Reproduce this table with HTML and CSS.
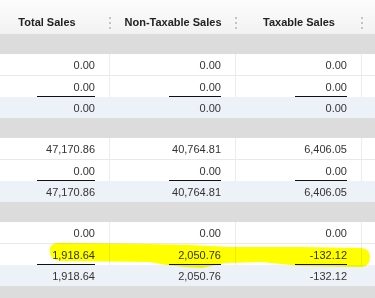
FILE: index.html
```html
<!DOCTYPE html>
<html>
<head>
<meta charset="utf-8">
<link rel="stylesheet" href="styles.css">
</head>
<body>
<div class="wrap">
  <div class="grid">
    <div class="hdr">
      <div class="hc">Total Sales<span class="grip"></span></div>
      <div class="hc">Non-Taxable Sales<span class="grip"></span></div>
      <div class="hc">Taxable Sales<span class="grip"></span></div>
      <div class="hc"></div>
    </div>

    <div class="band"></div>
    <div class="row first"><div class="c">0.00</div><div class="c">0.00</div><div class="c">0.00</div><div class="c"></div></div>
    <div class="row"><div class="c"><span class="ul w1">0.00</span></div><div class="c"><span class="ul">0.00</span></div><div class="c"><span class="ul">0.00</span></div><div class="c"></div></div>
    <div class="row total"><div class="c">0.00</div><div class="c">0.00</div><div class="c">0.00</div><div class="c"></div></div>

    <div class="band"></div>
    <div class="row first"><div class="c">47,170.86</div><div class="c">40,764.81</div><div class="c">6,406.05</div><div class="c"></div></div>
    <div class="row"><div class="c"><span class="ul w1">0.00</span></div><div class="c"><span class="ul">0.00</span></div><div class="c"><span class="ul">0.00</span></div><div class="c"></div></div>
    <div class="row total"><div class="c">47,170.86</div><div class="c">40,764.81</div><div class="c">6,406.05</div><div class="c"></div></div>

    <div class="band"></div>
    <div class="row first"><div class="c">0.00</div><div class="c">0.00</div><div class="c">0.00</div><div class="c"></div></div>
    <div class="row"><div class="c"><span class="ul w1">1,918.64</span></div><div class="c"><span class="ul">2,050.76</span></div><div class="c"><span class="ul">-132.12</span></div><div class="c"></div></div>
    <div class="row total"><div class="c">1,918.64</div><div class="c">2,050.76</div><div class="c">-132.12</div><div class="c"></div></div>

    <div class="band"></div>
  </div>
  <svg class="marker" width="375" height="298" viewBox="0 0 375 298">
    <path d="M50,248 Q51,243 60,243 L150,244 L190,245 L230,247 L300,247 L362,248 Q370,249 370,257 Q370,266 362,267 L300,266 L262,262 L226,263 L202,268 L185,267 L166,265 L150,262 L60,261 Q50,260 50,252 Z" fill="#ffff00"/>
  </svg>
</div>
</body>
</html>
```
FILE: styles.css
```css
html, body {
  margin: 0;
  padding: 0;
  background: #ffffff;
}
body {
  width: 375px;
  height: 298px;
  overflow: hidden;
  font-family: "Liberation Sans", Arial, sans-serif;
  font-size: 11px;
  color: #333333;
}
.wrap {
  position: relative;
  width: 375px;
  height: 298px;
  overflow: hidden;
}
.grid {
  margin-left: -16px;
  width: 504px;
}
.hdr, .row {
  display: grid;
  grid-template-columns: 126px 126px 126px 126px;
}
.hdr {
  height: 34px;
  box-sizing: border-box;
  padding-top: 10px;
  background: linear-gradient(#fcfcfc, #f2f2f2);
}
.hc {
  position: relative;
  height: 24px;
  line-height: 24px;
  text-align: center;
  font-weight: bold;
  color: #222222;
}
.grip {
  position: absolute;
  right: -1px;
  top: 7px;
  width: 2px;
  height: 12px;
  background: radial-gradient(circle at 1px 1px, #c4c4c4 0.9px, transparent 1.1px) 0 0 / 2px 5px repeat-y;
}
.band {
  height: 20px;
  background: #dcdcdc;
}
.row {
  height: 21px;
}
.row.first {
  height: 22px;
}
.row.first .c {
  border-bottom: 1px solid #e8e8e8;
}
.c {
  box-sizing: border-box;
  display: flex;
  justify-content: flex-end;
  align-items: center;
  padding-right: 14px;
  border-right: 1px solid #ececec;
  height: 100%;
}
.row.total {
  background: #edf2f8;
}
.row.total .c {
  border-right-color: transparent;
}
.ul {
  box-sizing: border-box;
  display: flex;
  justify-content: flex-end;
  align-items: center;
  height: 100%;
  width: 52px;
  padding-top: 1px;
  border-bottom: 1px solid #111111;
}
.ul.w1 {
  width: 58px;
}
.marker {
  position: absolute;
  left: 0;
  top: 0;
  mix-blend-mode: multiply;
  pointer-events: none;
}
```
